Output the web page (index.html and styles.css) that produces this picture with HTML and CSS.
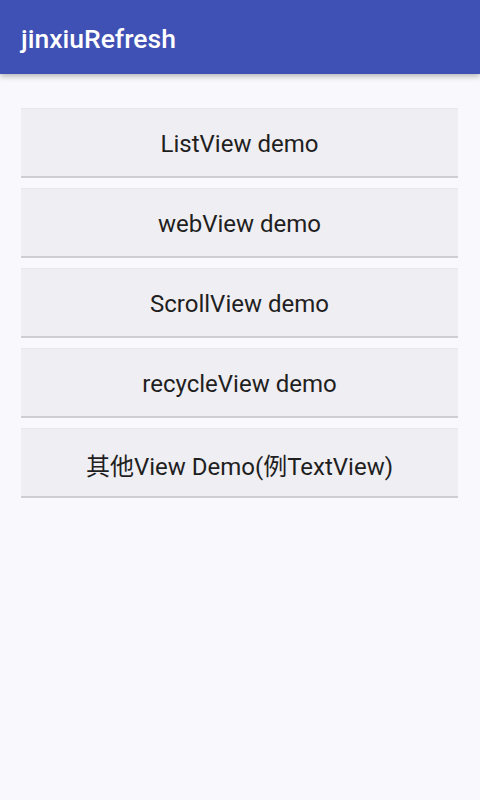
FILE: index.html
```html
<!DOCTYPE html>
<html>
<head>
<meta charset="utf-8">
<link rel="stylesheet" href="styles.css">
</head>
<body>
<header class="appbar"><span class="title">jinxiuRefresh</span></header>
<main class="list">
  <button class="btn">ListView demo</button>
  <button class="btn">webView demo</button>
  <button class="btn">ScrollView demo</button>
  <button class="btn">recycleView demo</button>
  <button class="btn">其他View Demo(例TextView)</button>
</main>
</body>
</html>
```
FILE: styles.css
```css
html, body {
  margin: 0;
  padding: 0;
  height: 100%;
  background: #f9f8fc;
  font-family: Roboto, "Noto Sans CJK SC", sans-serif;
}
.appbar {
  height: 74px;
  background: #3f51b5;
  display: flex;
  align-items: center;
  padding-left: 21px;
  box-shadow: 0 2px 6px rgba(0,0,0,0.3);
  position: relative;
}
.title {
  color: #ffffff;
  font-size: 26.5px;
  font-weight: 500;
  margin-top: 2px;
}
.list {
  display: flex;
  flex-direction: column;
  gap: 10px;
  padding: 34px 22px 0 21px;
}
.btn {
  height: 70px;
  border: none;
  border-top: 1px solid #e8e7eb;
  border-bottom: 2px solid #cfced2;
  background: #efeef2;
  color: #1f1f1f;
  font-family: Roboto, "Noto Sans CJK SC", sans-serif;
  font-size: 24px;
  padding: 3px 0 0 0;
  margin: 0;
}
```
